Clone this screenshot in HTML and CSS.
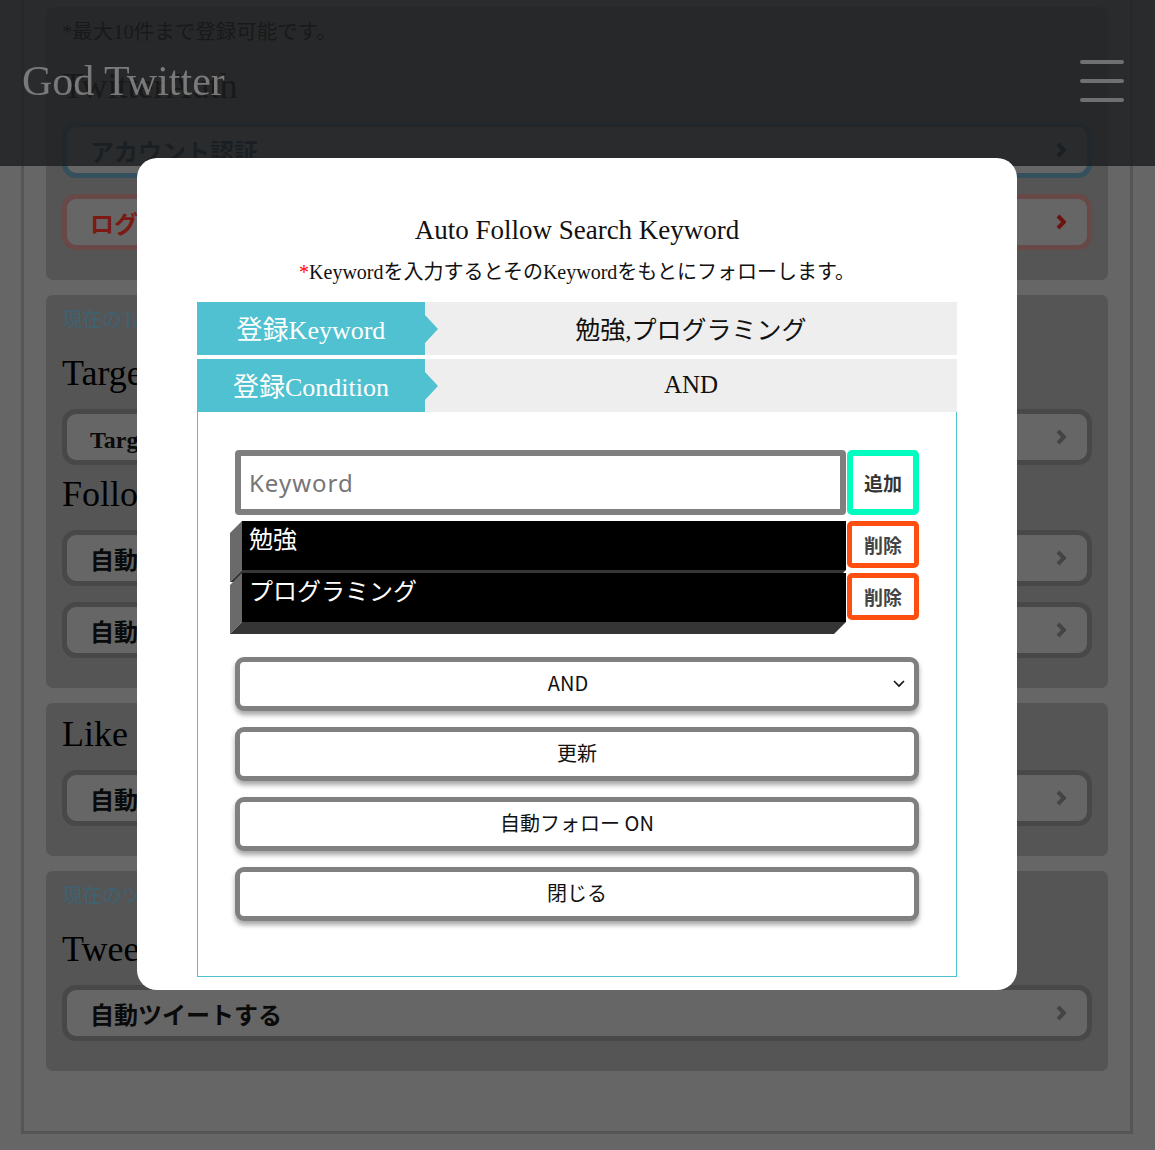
FILE: index.html
```html
<!DOCTYPE html>
<html lang="ja">
<head>
<meta charset="utf-8">
<title>God Twitter</title>
<link rel="stylesheet" href="styles.css">
</head>
<body>
<div class="page">
  <main class="container">
    <section class="card">
      <p class="note">*最大10件まで登録可能です。</p>
      <h2 class="card-title">TwitterAuth</h2>
      <a class="row-btn btn-blue"><span>アカウント認証</span><svg class="chev" viewBox="0 0 10 16" width="10" height="16"><polyline points="2,2 8,8 2,14"/></svg></a>
      <a class="row-btn btn-red"><span>ログアウト</span><svg class="chev" viewBox="0 0 10 16" width="10" height="16"><polyline points="2,2 8,8 2,14"/></svg></a>
    </section>
    <section class="card">
      <p class="card-sub">現在のTarget: 未設定</p>
      <h2 class="card-title">Target</h2>
      <a class="row-btn"><span>Target設定</span><svg class="chev" viewBox="0 0 10 16" width="10" height="16"><polyline points="2,2 8,8 2,14"/></svg></a>
      <h2 class="card-title">Follow</h2>
      <a class="row-btn"><span>自動フォロー設定</span><svg class="chev" viewBox="0 0 10 16" width="10" height="16"><polyline points="2,2 8,8 2,14"/></svg></a>
      <a class="row-btn"><span>自動フォロー解除</span><svg class="chev" viewBox="0 0 10 16" width="10" height="16"><polyline points="2,2 8,8 2,14"/></svg></a>
    </section>
    <section class="card">
      <h2 class="card-title first">Like</h2>
      <a class="row-btn"><span>自動いいね設定</span><svg class="chev" viewBox="0 0 10 16" width="10" height="16"><polyline points="2,2 8,8 2,14"/></svg></a>
    </section>
    <section class="card">
      <p class="card-sub">現在のツイート: なし</p>
      <h2 class="card-title">Tweet</h2>
      <a class="row-btn"><span>自動ツイートする</span><svg class="chev" viewBox="0 0 10 16" width="10" height="16"><polyline points="2,2 8,8 2,14"/></svg></a>
    </section>
  </main>
</div>

<header class="site-header">
  <h1 class="logo">God Twitter</h1>
  <div class="burger"><span></span><span></span><span></span></div>
</header>

<div class="modal">
  <h2 class="modal-title">Auto Follow Search Keyword</h2>
  <p class="modal-note"><span class="req">*</span>Keywordを入力するとそのKeywordをもとにフォローします。</p>
  <dl class="reg-table">
    <div class="reg-row"><dt>登録Keyword</dt><dd>勉強,プログラミング</dd></div>
    <div class="reg-row"><dt>登録Condition</dt><dd>AND</dd></div>
  </dl>
  <div class="edit-box">
    <div class="input-row">
      <input class="kw-input" type="text" placeholder="Keyword">
      <button class="btn-add">追加</button>
    </div>
    <ul class="kw-list">
      <li class="kw-row"><span class="kw-item">勉強</span><button class="btn-del">削除</button></li>
      <li class="kw-row"><span class="kw-item">プログラミング</span><button class="btn-del">削除</button></li>
    </ul>
    <div class="wide select">AND<svg class="sel-chev" viewBox="0 0 12 8" width="12" height="8"><polyline points="1,1 6,6 11,1"/></svg></div>
    <button class="wide">更新</button>
    <button class="wide">自動フォロー ON</button>
    <button class="wide">閉じる</button>
  </div>
</div>
</body>
</html>
```

FILE: styles.css
```css
html, body {
  margin: 0;
  padding: 0;
}
body {
  background: #666;
  width: 1155px;
  height: 1150px;
  overflow: hidden;
  font-family: "Liberation Serif", "Noto Sans CJK JP", serif;
  color: #111;
}

/* ---------- page under the overlay ---------- */
.page {
  padding: 0 22px 0 21px;
}
.container {
  display: flex;
  flex-direction: column;
  gap: 15px;
  border: 3px solid #555;
  border-top: none;
  padding: 7px 22px 60px;
}
.card {
  background: #555;
  border-radius: 7px;
  padding: 11px 16px 30px;
  display: flex;
  flex-direction: column;
}
.note {
  margin: 0;
  font-size: 20.5px;
  line-height: 28px;
  color: #000;
}
.card-sub {
  margin: 0 0 10px;
  font-size: 20px;
  line-height: 28px;
  color: #3f6272;
}
.card-title {
  margin: 9px 0 16px;
  font-size: 36px;
  line-height: 40px;
  font-weight: normal;
  color: #000;
}
.note + .card-title {
  margin-top: 20px;
}
.card-title.first {
  margin-top: 0;
}
.row-btn {
  display: flex;
  align-items: center;
  justify-content: space-between;
  height: 56px;
  box-sizing: border-box;
  border: 5px solid #484848;
  border-radius: 14px;
  background: #666;
  padding: 0 21px 0 23px;
  font-size: 24px;
  font-weight: bold;
  color: #0a0a0a;
}
.row-btn + .row-btn {
  margin-top: 16px;
}
.chev polyline {
  fill: none;
  stroke: #444;
  stroke-width: 4;
}
.btn-blue {
  border-color: #33505c;
  color: #0c2434;
}
.btn-blue .chev polyline {
  stroke: #0c2434;
}
.btn-red {
  border-color: #694848;
  color: #7a1a12;
}
.btn-red .chev polyline {
  stroke: #6e1410;
}

/* ---------- header ---------- */
.site-header {
  position: fixed;
  top: 0;
  left: 0;
  right: 0;
  height: 166px;
  background: rgba(29, 30, 32, 0.82);
  display: flex;
  align-items: center;
  justify-content: space-between;
  padding: 0 31px 4px 22px;
  box-sizing: border-box;
}
.logo {
  margin: 0;
  font-size: 42px;
  font-weight: normal;
  color: #7a7a7a;
  line-height: 1;
}
.burger {
  display: flex;
  flex-direction: column;
  gap: 15px;
  width: 44px;
}
.burger span {
  display: block;
  height: 4px;
  border-radius: 2px;
  background: #707070;
}

/* ---------- modal ---------- */
.modal {
  position: fixed;
  left: 137px;
  top: 158px;
  width: 880px;
  height: 832px;
  box-sizing: border-box;
  background: #fff;
  border-radius: 20px;
  padding: 56px 60px 12px;
}
.modal-title {
  margin: 0;
  font-size: 27px;
  line-height: 32px;
  font-weight: normal;
  text-align: center;
  color: #111;
}
.modal-note {
  margin: 12px 0 16px;
  font-size: 20px;
  line-height: 28px;
  text-align: center;
  color: #111;
}
.req {
  color: #f00;
}
.reg-table {
  margin: 0;
  display: flex;
  flex-direction: column;
  gap: 4px;
}
.reg-row {
  display: flex;
  height: 53px;
}
.reg-row dt {
  position: relative;
  width: 228px;
  background: #4fc1d0;
  color: #fff;
  font-size: 26px;
  display: flex;
  align-items: center;
  justify-content: center;
  padding-bottom: 3px;
  box-sizing: border-box;
}
.reg-row dt::after {
  content: "";
  position: absolute;
  left: 100%;
  top: 50%;
  margin-top: -14px;
  border-left: 13px solid #4fc1d0;
  border-top: 14px solid transparent;
  border-bottom: 14px solid transparent;
}
.reg-row dd {
  flex: 1;
  margin: 0;
  background: #eee;
  font-size: 25px;
  display: flex;
  align-items: center;
  justify-content: center;
  color: #111;
  padding-bottom: 2px;
}
.edit-box {
  border: 1px solid #4fc1d0;
  border-top: none;
  padding: 38px 37px 55px;
  display: flex;
  flex-direction: column;
}
.input-row {
  display: flex;
  gap: 1px;
  height: 65px;
}
.kw-input {
  flex: 1;
  min-width: 0;
  box-sizing: border-box;
  border: 6px solid #7f7f7f;
  border-radius: 4px;
  padding: 0 8px;
  font-family: "Noto Sans", "Noto Sans CJK JP", sans-serif;
  font-size: 24px;
  letter-spacing: 1px;
  outline: none;
}
.kw-input::placeholder {
  color: #767676;
}
.btn-add,
.btn-del {
  width: 72px;
  box-sizing: border-box;
  background: #fff;
  border-radius: 5px;
  font-family: "Noto Sans CJK JP", sans-serif;
  font-size: 19px;
  font-weight: bold;
  color: #333;
  padding: 0;
}
.btn-add {
  border: 6px solid #00fcbf;
}
.kw-list {
  list-style: none;
  margin: 6px 0 0;
  padding: 0;
  display: flex;
  flex-direction: column;
  gap: 3px;
}
.kw-row {
  display: flex;
  gap: 1px;
  height: 49px;
}
.kw-item {
  position: relative;
  flex: 1;
  margin-left: 7px;
  background: #000;
  color: #fff;
  font-size: 24px;
  line-height: 34px;
  padding: 2px 8px 0 7px;
}
.kw-item::before {
  content: "";
  position: absolute;
  right: 100%;
  top: 0;
  width: 12px;
  height: 100%;
  background: #6a6a6a;
  transform: skewY(-45deg);
  transform-origin: right top;
}
.kw-item::after {
  content: "";
  position: absolute;
  left: 0;
  right: 0;
  top: 100%;
  height: 12px;
  background: #353535;
  transform: skewX(-45deg);
  transform-origin: left top;
}
.btn-del {
  height: 47px;
  border: 5px solid #ff4f10;
  color: #444;
}
.wide {
  position: relative;
  display: flex;
  align-items: center;
  justify-content: center;
  height: 54px;
  box-sizing: border-box;
  border: 5px solid #808080;
  border-radius: 9px;
  background: #fff;
  box-shadow: 0 4px 5px rgba(0, 0, 0, 0.35);
  font-family: "Noto Sans CJK JP", sans-serif;
  font-size: 20px;
  color: #111;
  margin-top: 16px;
  padding: 0 0 3px;
}
.select {
  margin-top: 35px;
  padding-right: 18px;
}
.sel-chev {
  position: absolute;
  right: 9px;
  top: 50%;
  margin-top: -4px;
}
.sel-chev polyline {
  fill: none;
  stroke: #111;
  stroke-width: 1.6;
}
```
